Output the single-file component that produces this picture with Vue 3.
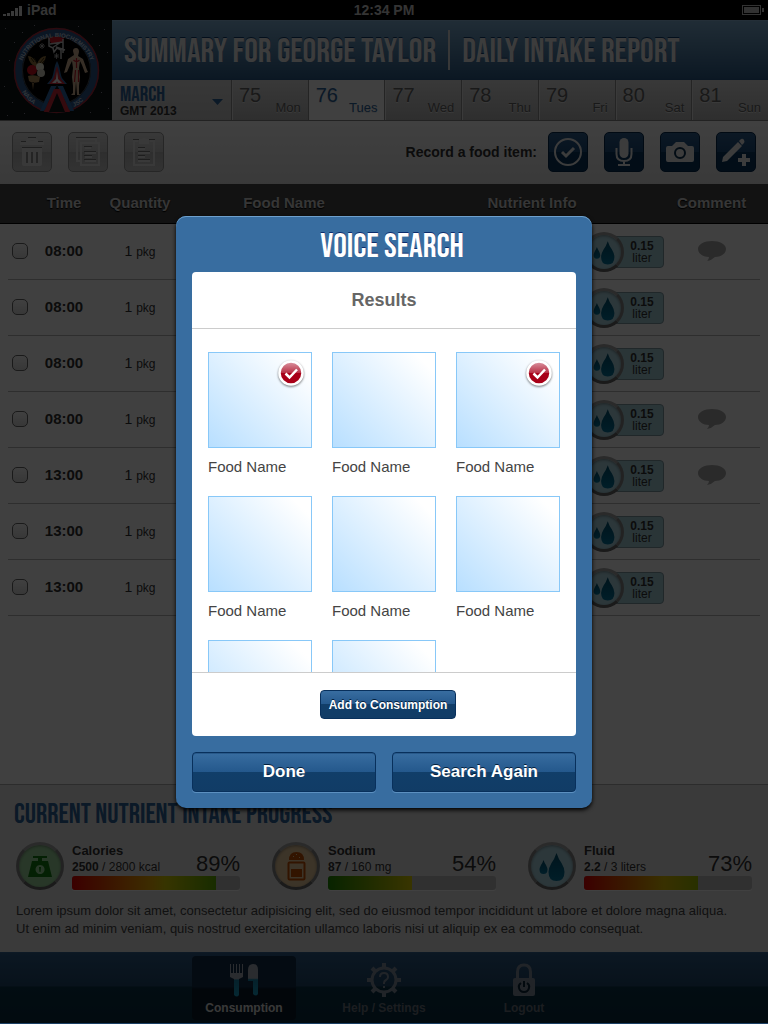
<script setup>
import { ref } from 'vue'

const days = [
  { n: 75, d: 'Mon' }, { n: 76, d: 'Tues', on: true }, { n: 77, d: 'Wed' }, { n: 78, d: 'Thu' },
  { n: 79, d: 'Fri' }, { n: 80, d: 'Sat' }, { n: 81, d: 'Sun' },
]
const rows = [
  { t: '08:00', c: true }, { t: '08:00' }, { t: '08:00' }, { t: '08:00', c: true },
  { t: '13:00', c: true }, { t: '13:00' }, { t: '13:00' },
]
const gauges = [
  { k: 'calories', name: 'Calories', now: '2500', max: '2800 kcal', pct: '89%', fill: 86 },
  { k: 'sodium', name: 'Sodium', now: '87', max: '160 mg', pct: '54%', fill: 50 },
  { k: 'fluid', name: 'Fluid', now: '2.2', max: '3 liters', pct: '73%', fill: 68 },
]
const foods = ref([
  { name: 'Food Name', on: true }, { name: 'Food Name', on: false }, { name: 'Food Name', on: true },
  { name: 'Food Name', on: false }, { name: 'Food Name', on: false }, { name: 'Food Name', on: false },
  { name: '', on: false }, { name: '', on: false },
])
</script>

<template>
  <div class="page">
    <div class="status">
      <span class="carrier">
        <svg width="20" height="11" viewBox="0 0 20 11" fill="#e4e4e4" aria-hidden="true">
          <path d="M0 9h3v2H0zM4 8h3v3H4zM8 6h3v5H8zM12 3h3v8h-3zM16 1h3v10h-3z" />
        </svg>
        iPad
      </span>
      <span>12:34 PM</span>
      <svg class="battery" width="23" height="11" viewBox="0 0 23 11" aria-hidden="true">
        <rect x=".5" y=".5" width="18" height="9" fill="none" stroke="#c8c8c8" />
        <path d="M2 2h15v6H2zM20 3h2v4h-2z" fill="#c8c8c8" />
      </svg>
    </div>

    <header class="top">
      <svg class="logo" viewBox="0 0 112 100" role="img" aria-label="Nutritional Biochemistry">
        <rect width="112" height="100" fill="#0c1416" />
        <g fill="#889">
          <path d="M5 8h1v1H5zM14 22h1v1h-1zM9 40h1v1H9zM4 66h1v1H4zM12 82h1v1h-1zM22 12h1v1h-1zM34 5h1v1h-1zM78 6h1v1h-1zM92 14h1v1h-1zM104 9h1v1h-1zM107 32h1v1h-1zM101 72h1v1h-1zM108 88h1v1h-1zM90 92h1v1h-1zM24 93h1v1h-1zM7 95h1v1H7zM99 25h1v1h-1z" />
        </g>
        <circle cx="56.500" cy="50.500" r="38.500" fill="#000" stroke="#2c588c" stroke-width="8" />
        <circle cx="56.500" cy="50.500" r="42" fill="none" stroke="#b02838" stroke-width="1.500" />
        <circle cx="56.500" cy="50.500" r="34" fill="none" stroke="#8c9cb0" stroke-width=".5" />
        <path d="M57 66 45 92H69Z" fill="#0c1416" />
        <path d="M51 66 40 91h4l13-26 13 26h4L63 66Z" fill="#2c68a8" />
        <path d="M54 69 44 92h5l8-19 8 19h5L60 69Z" fill="#d02838" />
        <path d="M57 41c-3 5-3 12-5 17l-5 6h20l-5-6c-2-5-2-12-5-17Z" fill="#2c68a8" />
        <path d="M57 46c-2 5-2 9-4 13l-4 5h16l-4-5c-2-4-2-8-4-13Z" fill="#d02838" />
        <path d="M57 51l-1 8-4 4h4l1-2 1 2h4l-4-4Z" fill="#f4f4f4" />
        <path d="M48 18q8-3 16 0l-2 5H51Z" fill="#d81828" />
        <path d="M49 18v8l4 2 1 4 3-4 4 2v9m-9-11 9-6m-5 5 9 3m-15-6 13-2m0-3v14" fill="none" stroke="#ccc" stroke-width="1.500" />
        <path d="M39 26h6m-3-3v6m-2-5 4 4m0-4-4 4M54 36h5m-2.500-3v6m-2-5 4 4m0-4-4 4" stroke="#bbb" stroke-width=".8" />
        <path d="M28 36q5 0 9 8 3-8 9-8-1 8-9 12-8-4-9-12Z" fill="#9a7a40" />
        <path d="m31 38 3 4m0-4 3 5m7-5-4 5m5-3-5 5" stroke="#3a2c10" stroke-width="1" />
        <circle cx="32" cy="50" r="5" fill="#d01020" />
        <circle cx="40" cy="47" r="4" fill="#f0eedc" />
        <circle cx="41" cy="53" r="4" fill="#dcd8c8" />
        <path d="M28 56q6-2 12 1l-1 5q-7 2-10-1Zm4 6 1 8 1-8" fill="#b08a58" />
        <path d="M76 28q3 0 3 4l-1 4 5 3 4 11 1 2-3 1-3-8-2-4-1 7 1 9-1 9v8l2 1h-4l-1-14-1 14h-4l2-2v-7l-1-9 1-9-1-7-2 4-3 7-3 1 4-14 6-4-1-4q0-3 3-3Z" fill="#d8b898" />
        <path d="M76.500 38v10m-3-8q3 3 6 0m-4 10-1 12m4-12v12" stroke="#c01828" stroke-width="1.200" fill="none" />
        <path id="arcTop" d="M20.500 53a36 36 0 0 1 72 0" fill="none" />
        <path id="arcNasa" d="M22 72a40.500 40.500 0 0 0 24 18" fill="none" />
        <path id="arcJsc" d="M74 87a40.500 40.500 0 0 0 17-16" fill="none" />
        <g fill="#c0d0e0" class="logo-text">
          <text><textPath href="#arcTop" startOffset="50%" text-anchor="middle">NUTRITIONAL BIOCHEMISTRY</textPath></text>
          <text><textPath href="#arcNasa">NASA</textPath></text>
          <text><textPath href="#arcJsc">JSC</textPath></text>
        </g>
      </svg>
      <div class="top-main">
        <h1 class="title display"><span>Summary for George Taylor</span><i class="bar"></i><span>Daily Intake Report</span></h1>
        <nav class="dates">
          <button class="month" type="button">
            <span><b class="display">March</b><small>GMT 2013</small></span>
            <svg width="11" height="6" viewBox="0 0 11 6" aria-hidden="true"><path d="M0 0h11L5.500 6Z" fill="#2c649c" /></svg>
          </button>
          <button v-for="d in days" :key="d.n" type="button" class="day" :class="{ on: d.on }">
            <span class="num">{{ d.n }}</span><span class="dow">{{ d.d }}</span>
          </button>
        </nav>
      </div>
    </header>

    <div class="toolbar">
      <button class="tool grey" type="button" aria-label="Delete">
        <svg viewBox="0 0 40 40"><path d="M14 9q0-3 6-3t6 3h4q2 0 2 4H8q0-4 2-4ZM17 9h6q0-1-3-1t-3 1ZM10 16h20v16q0 2-2 2H12q-2 0-2-2Z" fill="#e4e4e4" fill-rule="evenodd" /><path d="M15 20v11M20 20v11M25 20v11" stroke="#909090" stroke-width="2" /><path d="M9 9.500h5m12 0h5M16 5.500h8M10 15.500h20" stroke="#787878" stroke-width="1" /></svg>
      </button>
      <button class="tool grey" type="button" aria-label="Copy">
        <svg viewBox="0 0 40 40" fill="none" stroke="#e4e4e4" stroke-width="2"><path d="M13 29H9V7h19v3" /><path d="M13 11h18v22H13Z" /><path d="M17 16h6m-6 5h11m-11 4h7m-7 4h11" /><path d="M16 14.500h8m-8 5h12m-12 4h8m-8 4h12M8 5.500h21" stroke="#787878" stroke-width="1" /></svg>
      </button>
      <button class="tool grey" type="button" aria-label="Paste">
        <svg viewBox="0 0 40 40" fill="none" stroke="#e4e4e4" stroke-width="2"><path d="M14 9h-4v24h20V9h-4" /><path d="M15 7h3l1-1h2l1 1h3v5H15Z" fill="#e4e4e4" stroke="none" /><path d="M14 17h7m-7 4h12m-12 4h7m-7 4h12" /><path d="M14 15.500h7m-7 4h12m-12 4h7m-7 4h12M9 7.500h6m10 0h6" stroke="#787878" stroke-width="1" /></svg>
      </button>
      <span class="record">Record a food item:</span>
      <button class="tool blue" type="button" aria-label="Pick from list">
        <svg viewBox="0 0 40 40" fill="none" stroke="#eee"><circle cx="20" cy="20" r="13" stroke-width="2" /><path d="m14 20 4 4 8-8" stroke-width="3" /></svg>
      </button>
      <button class="tool blue" type="button" aria-label="Voice">
        <svg viewBox="0 0 40 40"><rect x="15.500" y="6" width="9" height="20" rx="4.500" fill="#eee" /><path d="M12.500 16v6q0 7 7.500 7t7.500-7v-6M20 29v4m-6 0h12" fill="none" stroke="#eee" stroke-width="2" /></svg>
      </button>
      <button class="tool blue" type="button" aria-label="Camera">
        <svg viewBox="0 0 40 40"><path d="M8 14h4l4-4h8l4 4h4q2 0 2 2v12q0 2-2 2H8q-2 0-2-2V16q0-2 2-2Z" fill="#eee" /><circle cx="20" cy="21" r="5" fill="#eee" stroke="#0a3050" stroke-width="2" /></svg>
      </button>
      <button class="tool blue" type="button" aria-label="Manual entry">
        <svg viewBox="0 0 40 40"><path d="M7 25 22 10l4 4-15 15-5 1ZM23 9l2-2q2-1 3 1t0 3l-2 2Z" fill="#eee" /><path d="M28 22v12m-6-6h12" stroke="#eee" stroke-width="4" /></svg>
      </button>
    </div>

    <table class="log">
      <colgroup><col class="c-pad"><col class="c-check"><col class="c-time"><col class="c-qty"><col class="c-food"><col><col class="c-comment"><col class="c-end"></colgroup>
      <thead>
        <tr><th></th><th></th><th>Time</th><th>Quantity</th><th>Food Name</th><th>Nutrient Info</th><th>Comment</th><th></th></tr>
      </thead>
      <tbody>
        <tr v-for="(r, i) in rows" :key="i">
          <td class="edge"></td>
          <td><input class="pick" type="checkbox" :aria-label="'Select entry ' + (i + 1)"></td>
          <td class="time">{{ r.t }}</td>
          <td class="qty">1 <small>pkg</small></td>
          <td></td>
          <td class="info">
            <div class="chip">
              <span class="orb fluid small"><svg viewBox="0 0 48 48"><use href="#drops" /></svg></span>
              <span class="chip-text"><b>0.15</b><span>liter</span></span>
            </div>
          </td>
          <td>
            <svg v-if="r.c" class="bubble" width="28" height="20" viewBox="0 0 28 20" role="img" aria-label="Has comment"><path d="M14 0c8 0 14 3.500 14 8s-5 8-11 8q-3 3-8 4 2-2 2-4C5 16 0 12.500 0 8s6-8 14-8Z" fill="#a8a8a8" /></svg>
          </td>
          <td class="edge-last"></td>
        </tr>
      </tbody>
    </table>

    <section class="progress">
      <h2 class="display">Current Nutrient Intake Progress</h2>
      <div class="gauges">
        <div v-for="g in gauges" :key="g.k" class="gauge">
          <span class="orb" :class="g.k">
            <svg viewBox="0 0 48 48" aria-hidden="true">
              <path v-if="g.k === 'calories'" d="M17 14h14v2h-5v3h6l4 16H12l4-16h6v-3h-5ZM24 23a4.500 4.500 0 1 0 .1 0Zm-1 2h2l-.5 5h-1Z" fill="#118010" fill-rule="evenodd" />
              <g v-else-if="g.k === 'sodium'" fill="#c85000">
                <path d="M17 18q0-8 7.500-8t7.500 8Zm4-3h1v-1h-1Zm3-2h1v-1h-1Zm3 3h1v-1h-1Z" fill-rule="evenodd" />
                <rect x="16.500" y="20.500" width="16" height="17" rx="1" fill="none" stroke="#c85000" stroke-width="2" /><path d="M19 27h11v8H19Z" />
              </g>
              <use v-else href="#drops" />
            </svg>
          </span>
          <div class="g-body">
            <div class="g-name">{{ g.name }}</div>
            <div class="g-val"><span><b>{{ g.now }}</b> / {{ g.max }}</span><span class="g-pct">{{ g.pct }}</span></div>
            <div class="track"><div class="fill" :class="'f-' + g.k" :style="{ width: g.fill + '%' }"></div></div>
          </div>
        </div>
      </div>
      <p>Lorem ipsum dolor sit amet, consectetur adipisicing elit, sed do eiusmod tempor incididunt ut labore et dolore magna aliqua. Ut enim ad minim veniam, quis nostrud exercitation ullamco laboris nisi ut aliquip ex ea commodo consequat.</p>
    </section>

    <nav class="tabs">
      <button class="tab on" type="button">
        <svg viewBox="0 0 36 36" aria-hidden="true">
          <defs><linearGradient id="steel" x1="0" y1="0" x2="0" y2="1"><stop offset=".45" stop-color="#a8b0bc" /><stop offset=".5" stop-color="#1484ac" /><stop offset="1" stop-color="#18a0c8" /></linearGradient></defs>
          <path d="M4 2h1v9h2V2h1v9h2V2h1v9h2V2h1v9h2V2h1v13l-4 2v16q-2 3-5 0V17l-4-2V2Z" fill="url(#steel)" />
          <path d="M22 19V8q0-6 5-6t5 6v24q-2 3-5 0V19Z" fill="url(#steel)" />
        </svg>
        Consumption
      </button>
      <button class="tab" type="button">
        <svg viewBox="0 0 36 36" aria-hidden="true" fill="none" stroke="#8490a0">
          <circle cx="18" cy="18" r="12" stroke-width="3" />
          <path d="M18 1v5m0 24v5M1 18h5m24 0h5M6 6l4 4m16 16 4 4M6 30l4-4m16-16 4-4" stroke-width="4" />
          <path d="M14 15q0-4 4-4t4 4q0 2-2 3-2 1-2 3v1m0 2v2" stroke-width="2" />
        </svg>
        Help / Settings
      </button>
      <button class="tab" type="button">
        <svg viewBox="0 0 36 36" aria-hidden="true">
          <path d="M11.500 17v-7q0-7 6.500-7t6.500 7v7" fill="none" stroke="#8490a0" stroke-width="3" />
          <rect x="7" y="16" width="22" height="18" rx="2" fill="#8490a0" />
          <path d="M15 21q-3 2-2 5 1 4 5 4t5-4q1-3-2-5M18 19v6" fill="none" stroke="#0a2438" stroke-width="2" />
        </svg>
        Logout
      </button>
    </nav>

    <svg width="0" height="0" class="defs" aria-hidden="true">
      <defs>
        <linearGradient id="water" x1="0" y1="0" x2="0" y2="1"><stop offset="0" stop-color="#005070" /><stop offset="1" stop-color="#0478a0" /></linearGradient>
        <g id="drops" fill="url(#water)">
          <path d="M28.500 11q2 6 5 10 3 5 3 9 0 9-8 9t-8-9q0-4 3-9 3-4 5-10Z" />
          <path d="M15.500 18q1 3 2.500 5 1.500 3 1.500 4.500 0 4.500-4 4.500t-4-4.500q0-1.500 1.500-4.500 1.500-2 2.500-5Z" />
        </g>
      </defs>
    </svg>

    <div class="shade">
      <section class="modal" role="dialog" aria-labelledby="vs">
        <h2 id="vs" class="display">Voice Search</h2>
        <div class="panel">
          <h3>Results</h3>
          <div class="results">
            <label v-for="(f, i) in foods" :key="i" class="food">
              <span class="thumb">
                <input v-model="f.on" type="checkbox" :aria-label="'Result ' + (i + 1)">
                <svg v-if="f.on" class="mark" viewBox="0 0 26 26" aria-hidden="true">
                  <defs><linearGradient :id="'red' + i" x1="0" y1="0" x2="0" y2="1"><stop offset="0" stop-color="#dc98a4" /><stop offset=".48" stop-color="#b83448" /><stop offset=".5" stop-color="#a80018" /><stop offset="1" stop-color="#a80018" /></linearGradient></defs>
                  <circle cx="13" cy="13" r="11.500" :fill="`url(#red${i})`" stroke="#fff" stroke-width="2.500" />
                  <path d="m7.500 13.500 4 4 7.500-8" fill="none" stroke="#fff" stroke-width="2.500" />
                </svg>
              </span>
              <span v-if="f.name" class="food-name">{{ f.name }}</span>
            </label>
          </div>
          <div class="panel-foot"><button class="btn add" type="button">Add to Consumption</button></div>
        </div>
        <div class="actions">
          <button class="btn" type="button">Done</button>
          <button class="btn" type="button">Search Again</button>
        </div>
      </section>
    </div>
  </div>
</template>

<style>
body { background: #fff; }
</style>

<style scoped>
* { box-sizing: border-box; }
button { font: inherit; border: 0; padding: 0; margin: 0; background: none; color: inherit; }
h1, h2, h3, p { margin: 0; }
.page { position: relative; min-height: 100vh; display: flex; flex-direction: column; font-family: "Liberation Sans", Arial, sans-serif; color: #333; background: #fff; }
.display { font-family: "Bebas Neue", "Liberation Sans Narrow", "Liberation Sans", sans-serif; font-weight: 400; text-transform: uppercase; white-space: nowrap; }
.defs { position: absolute; }

.status { display: grid; grid-template-columns: 1fr auto 1fr; align-items: center; height: 20px; padding: 0 3px; background: #000; color: #d0d0d0; font-size: 14px; font-weight: 700; }
.carrier { display: flex; align-items: center; gap: 4px; }
.battery { justify-self: end; }

.top { display: flex; border-bottom: 1px solid #888; }
.logo { width: 112px; height: 100px; flex: none; display: block; }
.logo-text { font-size: 6px; font-weight: 700; }
.top-main { flex: 1; min-width: 0; }
.title { display: flex; align-items: center; height: 60px; padding: 0 12px; font-size: 34px; line-height: 40px; color: #efefef; text-shadow: 0 -1px 0 #0c3c70; background: linear-gradient(#a0c8e8, #80b0d4 1px, #30608c 58px, #285888); }
.title span { padding-top: 4px; }
.title .bar { width: 2px; height: 40px; margin: 0 12px; background: #ddd; }
.dates { display: flex; height: 40px; }
.month { flex: none; width: 120px; padding: 3px 8px 0; display: flex; justify-content: space-between; align-items: center; text-align: left; background: linear-gradient(#dcdcdc, #c8c8c8); border-right: 1px solid #909090; }
.month b { display: block; font-size: 21px; line-height: 19px; color: #2c649c; }
.month small { display: block; font-size: 12px; line-height: 14px; font-weight: 700; }
.day { flex: 1; display: flex; flex-direction: column; justify-content: space-between; padding: 4px 7px 5px 6px; background: linear-gradient(#e0e0e0, #b8b8b8); border-right: 1px solid #909090; border-left: 1px solid #e8e8e8; color: #666; text-shadow: 0 1px 0 #e8e8e8; }
.day:last-child { border-right: 0; }
.day.on { background: #fff; color: #2c649c; border-left-color: #fff; }
.num { font-size: 20px; line-height: 22px; text-align: left; }
.dow { font-size: 13px; line-height: 15px; text-align: right; margin-top: -6px; }

.toolbar { display: flex; align-items: center; gap: 16px; height: 63px; padding: 0 12px 2px; background: linear-gradient(#fff, #e4e4e4); }
.tool { display: flex; flex: none; width: 40px; height: 40px; border-radius: 5px; }
.tool svg { display: block; flex: none; width: 40px; height: 40px; margin: -1px; }
.grey { border: 1px solid #989898; background: linear-gradient(#e0e0e0, #c8c8c8 50%, #b8b8b8 50%, #c8c8c8); }
.blue { border: 1px solid #04284c; background: linear-gradient(#306090, #1c4c7c 50%, #083860 50%, #08345c); }
.record { margin-left: auto; margin-right: -5px; font-size: 14px; font-weight: 700; }

.log { width: 100%; table-layout: fixed; border-collapse: separate; border-spacing: 0; }
.c-pad { width: 8px; } .c-check { width: 24px; } .c-time { width: 64px; } .c-qty { width: 88px; } .c-food { width: 200px; } .c-comment { width: 64px; } .c-end { width: 24px; }
.log th { height: 40px; padding: 0 0 2px; background: #484848; border-bottom: 1px solid #000; color: #d8d8d8; font-size: 15px; text-shadow: 0 1px 1px #000; overflow: visible; white-space: nowrap; }
.log th:nth-child(7) { text-indent: -3px; }
.log td { height: 56px; padding: 0 0 2px; border-bottom: 1px solid #b8b8b8; text-align: center; vertical-align: middle; }
.log td.info { padding: 0; }
.log td.edge { border-bottom-color: transparent; }
.log td.edge-last { border-bottom: 0; background: linear-gradient(#b8b8b8, #b8b8b8) left bottom / 16px 1px no-repeat; }
.pick { appearance: none; display: block; width: 16px; height: 16px; margin: 0 4px; border: 1px solid #686868; border-radius: 5px; background: linear-gradient(#fff, #dcdcdc); }
.time { font-size: 15px; font-weight: 700; }
.qty { font-size: 14px; }
.qty small { font-size: 12px; }
.bubble { display: block; margin: 0 auto; }
.chip { width: 80px; height: 40px; margin: 0 16px 0 auto; display: flex; align-items: center; position: relative; }
.chip::before { content: ""; position: absolute; left: 24px; right: 0; top: 4px; bottom: 4px; border: 1px solid #809ca4; border-radius: 4px; background: #a8d4dc; }
.chip-text { position: relative; flex: 1; display: flex; flex-direction: column; font-size: 12px; line-height: 12px; padding: 0 4px 0 0; }

.orb { position: relative; flex: none; width: 48px; height: 48px; border-radius: 50%; border: 3px solid #888; border-bottom-color: #686868; border-top-color: #a8a8a8; box-shadow: inset 0 1px 3px #4448; }
.orb svg { position: absolute; inset: -3px; display: block; }
.orb.small { width: 40px; height: 40px; }
.calories { background: #a0dca0; }
.sodium { background: #f0d0a0; }
.fluid { background: #b0dce8; }

.progress { margin-top: auto; background: #e8e8e8; border-top: 1px solid #b0b0b0; padding-bottom: 14px; }
.progress h2 { padding: 17px 14px 0; font-size: 28px; line-height: 26px; height: 56px; color: #2c649c; }
.gauges { display: grid; grid-template-columns: repeat(3, 1fr); }
.gauge { display: flex; gap: 8px; padding: 0 16px; align-items: center; height: 50px; }
.g-body { flex: 1; min-width: 0; }
.g-name { font-size: 13px; line-height: 16px; font-weight: 700; }
.g-val { display: flex; justify-content: space-between; align-items: baseline; font-size: 12px; line-height: 16px; height: 17px; white-space: nowrap; }
.g-pct { font-size: 22px; line-height: 8px; }
.track { height: 14px; border-radius: 3px; background: #c0c0c0; overflow: hidden; box-shadow: 0 1px 0 #fff; }
.fill { height: 100%; }
.f-calories { background: linear-gradient(90deg, #e80000, #f0b000 55%, #d8d000 65%, #60b000); }
.f-sodium { background: linear-gradient(90deg, #208c00, #e0d000); }
.f-fluid { background: linear-gradient(90deg, #e80000, #e0c000 70%, #a0c000); }
.progress p { padding: 11px 28px 0 16px; font-size: 13px; line-height: 18px; color: #444; }

.tabs { display: flex; justify-content: center; gap: 36px; height: 72px; padding: 4px 0; background: linear-gradient(#386c9c 0, #305c88 1px, #20486c 34px, #083448 35px, #082c40); border-bottom: 1px solid #1c4064; }
.tab { width: 104px; height: 64px; display: flex; flex-direction: column; align-items: center; border-radius: 4px; padding-top: 6px; font-size: 12px; line-height: 16px; font-weight: 700; color: #6c7480; }
.tab svg { width: 36px; height: 36px; margin-bottom: 2px; }
.tab.on { background: linear-gradient(#102c48 48%, #081828 52%); color: #e0e0e0; }

.shade { position: absolute; inset: 0 0 1px; background: rgba(0, 0, 0, .75); display: flex; align-items: center; justify-content: center; }
.modal { width: 416px; padding: 0 16px 16px; border-radius: 10px; background: #386da0; box-shadow: inset 0 1px 0 #6ea0cc, 0 2px 4px #000; }
.modal h2 { height: 56px; padding-left: 16px; line-height: 62px; text-align: center; font-size: 34px; color: #fff; text-shadow: 0 -1px 0 #0c2c6c; }
.panel { background: #fff; border-radius: 4px; }
.panel h3 { height: 57px; line-height: 56px; border-bottom: 1px solid #ccc; text-align: center; font-size: 18px; color: #666; }
.results { display: grid; grid-template-columns: repeat(3, 104px); justify-content: space-between; align-content: start; row-gap: 10px; height: 343px; padding: 23px 16px 0; overflow: auto; scrollbar-width: none; }
.food { display: block; height: 134px; }
.thumb { display: block; position: relative; height: 96px; border: 1px solid #88c8f8; background: linear-gradient(45deg, #b8dfff, #fff 90%); }
.thumb input { position: absolute; inset: 0; width: 100%; height: 100%; margin: 0; opacity: 0; }
.mark { position: absolute; top: 7px; right: 7px; width: 26px; height: 26px; filter: drop-shadow(0 1px 1px #0008); }
.food-name { display: block; font-size: 15px; line-height: 38px; color: #444; }
.panel-foot { height: 64px; padding-left: 8px; border-top: 1px solid #ccc; display: flex; align-items: center; justify-content: center; }
.actions { display: grid; grid-template-columns: 1fr 1fr; gap: 16px; margin-top: 16px; }
.btn { height: 40px; padding-top: 1px; border: 1px solid #08305c; border-radius: 4px; color: #fff; font-size: 17px; font-weight: 700; text-shadow: 0 -1px 0 #04203c; background: linear-gradient(#386da0, #24588c 50%, #113e69 50%, #113c66); box-shadow: inset 0 1px 0 #28598a, 0 1px 0 #5c90c0; }
.add { height: 29px; padding: 1px 8px 0; font-size: 12px; box-shadow: none; }
</style>
